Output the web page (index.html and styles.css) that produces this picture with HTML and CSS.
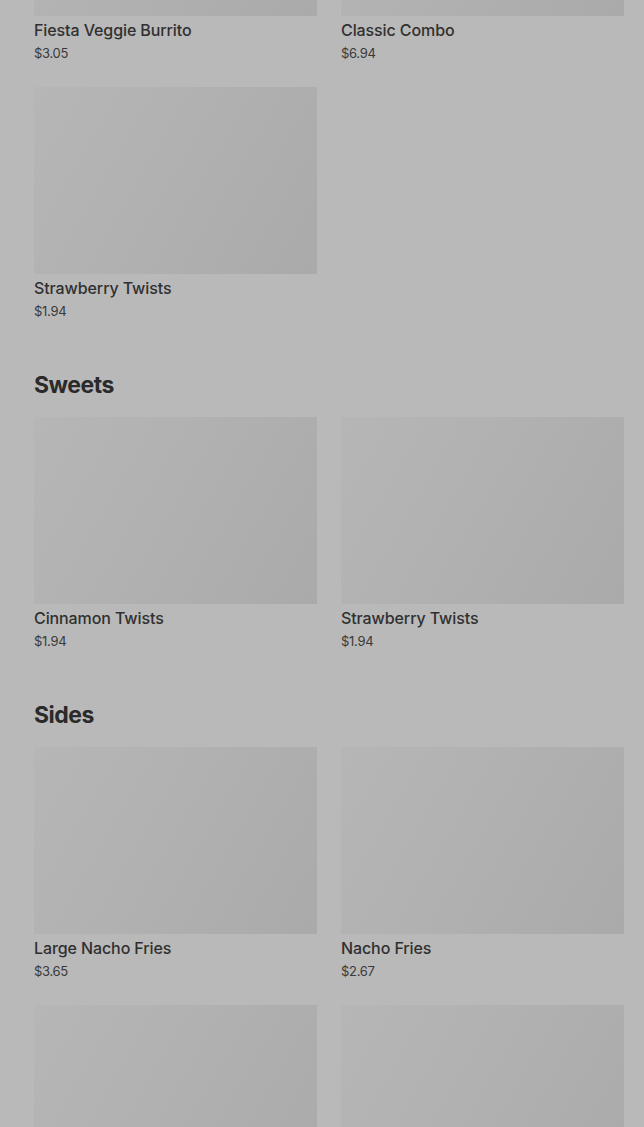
FILE: index.html
```html
<!DOCTYPE html>
<html>
<head>
<meta charset="utf-8">
<link rel="stylesheet" href="styles.css">
</head>
<body>
<div class="page">
  <section class="section first">
    <div class="grid">
      <div class="card"><div class="thumb"></div><div class="name">Fiesta Veggie Burrito</div><div class="price">$3.05</div></div>
      <div class="card"><div class="thumb"></div><div class="name">Classic Combo</div><div class="price">$6.94</div></div>
      <div class="card"><div class="thumb"></div><div class="name">Strawberry Twists</div><div class="price">$1.94</div></div>
    </div>
  </section>
  <section class="section">
    <h2 class="heading">Sweets</h2>
    <div class="grid">
      <div class="card"><div class="thumb"></div><div class="name">Cinnamon Twists</div><div class="price">$1.94</div></div>
      <div class="card"><div class="thumb"></div><div class="name">Strawberry Twists</div><div class="price">$1.94</div></div>
    </div>
  </section>
  <section class="section">
    <h2 class="heading">Sides</h2>
    <div class="grid">
      <div class="card"><div class="thumb"></div><div class="name">Large Nacho Fries</div><div class="price">$3.65</div></div>
      <div class="card"><div class="thumb"></div><div class="name">Nacho Fries</div><div class="price">$2.67</div></div>
      <div class="card"><div class="thumb"></div></div>
      <div class="card"><div class="thumb"></div></div>
    </div>
  </section>
</div>
</body>
</html>
```
FILE: styles.css
```css
html, body {
  margin: 0;
  padding: 0;
  background: #b9b9b9;
  overflow: hidden;
}
body {
  font-family: Inter, "Liberation Sans", sans-serif;
  color: #2e2e2e;
}
.page {
  padding: 0 20px 0 34px;
  display: flex;
  flex-direction: column;
  gap: 48px;
}
.section.first {
  margin-top: -171px;
}
.heading {
  margin: 0 0 16px;
  font-size: 23px;
  line-height: 32px;
  font-weight: 700;
  color: #2a2a2a;
  letter-spacing: -0.5px;
}
.grid {
  display: grid;
  grid-template-columns: 283px 283px;
  column-gap: 24px;
  row-gap: 24px;
}
.card {
  display: flex;
  flex-direction: column;
}
.thumb {
  height: 187px;
  background: linear-gradient(120deg, #b6b6b6 0%, #b1b1b1 45%, #aaaaaa 100%);
}
.name {
  margin-top: 3px;
  font-size: 16px;
  line-height: 22px;
  font-weight: 500;
  color: #303030;
  letter-spacing: -0.1px;
}
.price {
  margin-top: 2px;
  font-size: 13px;
  line-height: 20px;
  color: #3a3a3a;
  letter-spacing: -0.3px;
}
```
